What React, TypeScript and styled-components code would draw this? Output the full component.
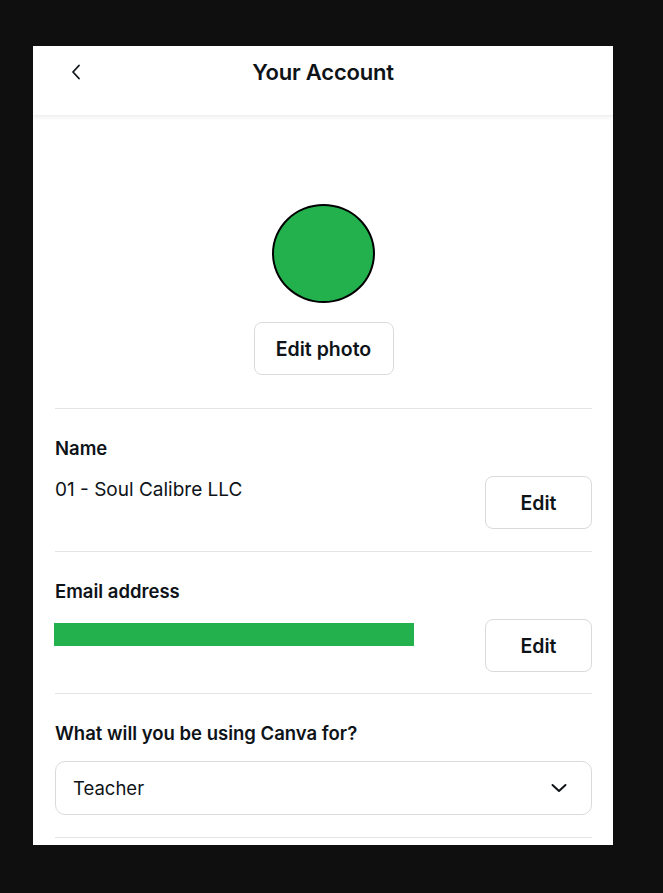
import styled, { createGlobalStyle } from 'styled-components';

const GlobalStyle = createGlobalStyle`
  html, body {
    margin: 0;
    padding: 0;
    background: #0f0f0f;
  }
  body {
    font-family: Inter, "Noto Sans", Arial, sans-serif;
    color: #0e1318;
  }
`;

const Page = styled.div`
  padding: 46px 0 0 33px;
  min-height: 893px;
  box-sizing: border-box;
`;

const Card = styled.div`
  width: 580px;
  height: 799px;
  background: #fff;
  overflow: hidden;
  display: flex;
  flex-direction: column;
`;

const Header = styled.header`
  height: 70px;
  flex-shrink: 0;
  display: grid;
  grid-template-columns: 60px 1fr 60px;
  align-items: start;
  padding-top: 12px;
  box-sizing: border-box;
  box-shadow: 0 2px 4px rgba(0, 0, 0, 0.06);
  border-bottom: 1px solid #f1f1f3;
`;

const BackButton = styled.button`
  border: none;
  background: none;
  padding: 0;
  margin-left: 38px;
  height: 28px;
  width: 20px;
  display: flex;
  align-items: center;
  cursor: pointer;
`;

const Title = styled.h1`
  margin: 0;
  text-align: center;
  font-size: 22px;
  line-height: 28px;
  font-weight: 600;
  letter-spacing: -0.2px;
`;

const Body = styled.div`
  padding: 0 21px 0 22px;
`;

const PhotoBlock = styled.div`
  display: flex;
  flex-direction: column;
  align-items: center;
  padding: 88px 0 33px;
`;

const Avatar = styled.div`
  width: 103px;
  height: 99px;
  box-sizing: border-box;
  border-radius: 50%;
  background: #22b14c;
  border: 2px solid #000;
`;

const OutlineButton = styled.button<{ $wide?: boolean }>`
  height: 53px;
  width: ${p => (p.$wide ? '140px' : '107px')};
  flex-shrink: 0;
  border: 1px solid #d9dadc;
  border-radius: 8px;
  background: #fff;
  font-family: inherit;
  font-size: 19.5px;
  font-weight: 600;
  color: #0e1318;
  cursor: pointer;
`;

const PhotoButton = styled(OutlineButton)`
  margin-top: 19px;
`;

const Section = styled.section<{ $tight?: boolean }>`
  border-top: 1px solid #e3e4e6;
  padding: 27px 0 ${p => (p.$tight ? '21px' : '22px')};
`;

const Label = styled.div`
  font-size: 18.5px;
  line-height: 24px;
  font-weight: 600;
`;

const Row = styled.div`
  display: flex;
  justify-content: space-between;
  align-items: flex-start;
  margin-top: 16px;
`;

const Value = styled.div`
  font-size: 19px;
  line-height: 24px;
  padding-top: 2px;
`;

const HiddenEmail = styled.div`
  width: 360px;
  height: 23px;
  margin: 4px 0 0 -1px;
  background: #22b14c;
`;

const Select = styled.div`
  margin-top: 16px;
  height: 52px;
  border: 1px solid #d9dadc;
  border-radius: 10px;
  display: flex;
  align-items: center;
  justify-content: space-between;
  padding: 0 24px 0 17px;
  font-size: 18.5px;
`;

const Chevron = ({ dir }: { dir: 'left' | 'down' }) =>
  dir === 'left' ? (
    <svg width="10" height="16" viewBox="0 0 10 16" fill="none">
      <path d="M8 1.5 2 8l6 6.5" stroke="#0e1318" strokeWidth="1.8" strokeLinecap="round" strokeLinejoin="round" />
    </svg>
  ) : (
    <svg width="16" height="10" viewBox="0 0 16 10" fill="none">
      <path d="M1.5 2 8 8l6.5-6" stroke="#0e1318" strokeWidth="2" strokeLinecap="round" strokeLinejoin="round" />
    </svg>
  );

const App = () => {
  return (
    <Page>
      <GlobalStyle />
      <Card>
        <Header>
          <BackButton aria-label="Back">
            <Chevron dir="left" />
          </BackButton>
          <Title>Your Account</Title>
          <span />
        </Header>
        <Body>
          <PhotoBlock>
            <Avatar />
            <PhotoButton $wide>Edit photo</PhotoButton>
          </PhotoBlock>

          <Section>
            <Label>Name</Label>
            <Row>
              <Value>01 - Soul Calibre LLC</Value>
              <OutlineButton>Edit</OutlineButton>
            </Row>
          </Section>

          <Section $tight>
            <Label>Email address</Label>
            <Row>
              <HiddenEmail />
              <OutlineButton>Edit</OutlineButton>
            </Row>
          </Section>

          <Section>
            <Label>What will you be using Canva for?</Label>
            <Select>
              <span>Teacher</span>
              <Chevron dir="down" />
            </Select>
          </Section>
          <Section />
        </Body>
      </Card>
    </Page>
  );
};

export default App;
